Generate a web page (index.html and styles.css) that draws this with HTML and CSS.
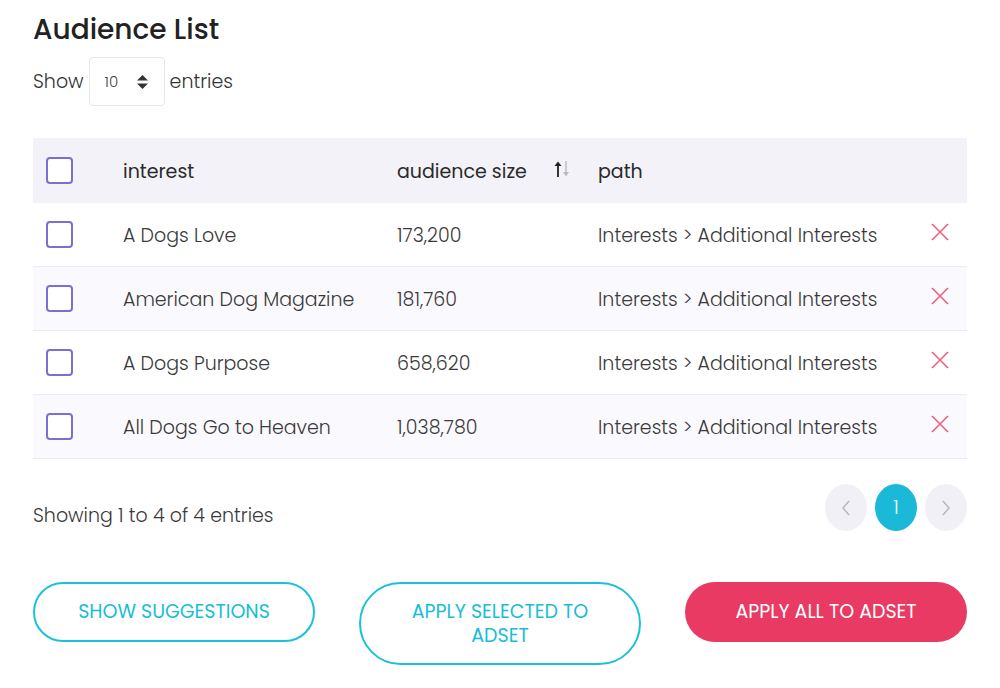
FILE: index.html
```html
<!DOCTYPE html>
<html>
<head>
<meta charset="utf-8">
<link rel="stylesheet" href="styles.css">
</head>
<body>
<div class="page">
  <h1 class="title">Audience List</h1>
  <div class="length">
    <span>Show</span>
    <div class="select">
      <span class="select-val">10</span>
      <svg class="select-arrows" width="13" height="18" viewBox="0 0 13 18"><path d="M1 7.5 L6.5 2 L12 7.5 Z M1 10.5 L6.5 16 L12 10.5 Z" fill="#333"/></svg>
    </div>
    <span>entries</span>
  </div>

  <table class="grid">
    <colgroup>
      <col class="c-check"><col class="c-interest"><col class="c-size"><col class="c-path"><col class="c-del">
    </colgroup>
    <thead>
      <tr>
        <th><span class="cb"></span></th>
        <th>interest</th>
        <th><div class="sorthead"><span>audience size</span>
          <svg class="sort" width="20" height="20" viewBox="0 0 20 20">
            <path d="M5 18 V4" stroke="#222" stroke-width="1.8"/>
            <path d="M1.5 7 L5 2.5 L8.5 7 Z" fill="#222"/>
            <path d="M13 2 V15" stroke="#bbb" stroke-width="1.4"/>
            <path d="M10 13 L13 17.5 L16 13 Z" fill="#bbb"/>
          </svg></div></th>
        <th>path</th>
        <th></th>
      </tr>
    </thead>
    <tbody>
      <tr>
        <td><span class="cb"></span></td><td>A Dogs Love</td><td>173,200</td><td>Interests &gt; Additional Interests</td>
        <td class="del"><svg width="18" height="18" viewBox="0 0 18 18"><path d="M1 1 L17 17 M17 1 L1 17" stroke="#f0607e" stroke-width="1.6"/></svg></td>
      </tr>
      <tr class="alt">
        <td><span class="cb"></span></td><td>American Dog Magazine</td><td>181,760</td><td>Interests &gt; Additional Interests</td>
        <td class="del"><svg width="18" height="18" viewBox="0 0 18 18"><path d="M1 1 L17 17 M17 1 L1 17" stroke="#f0607e" stroke-width="1.6"/></svg></td>
      </tr>
      <tr>
        <td><span class="cb"></span></td><td>A Dogs Purpose</td><td>658,620</td><td>Interests &gt; Additional Interests</td>
        <td class="del"><svg width="18" height="18" viewBox="0 0 18 18"><path d="M1 1 L17 17 M17 1 L1 17" stroke="#f0607e" stroke-width="1.6"/></svg></td>
      </tr>
      <tr class="alt">
        <td><span class="cb"></span></td><td>All Dogs Go to Heaven</td><td>1,038,780</td><td>Interests &gt; Additional Interests</td>
        <td class="del"><svg width="18" height="18" viewBox="0 0 18 18"><path d="M1 1 L17 17 M17 1 L1 17" stroke="#f0607e" stroke-width="1.6"/></svg></td>
      </tr>
    </tbody>
  </table>

  <div class="footer">
    <span class="info">Showing 1 to 4 of 4 entries</span>
    <div class="pager">
      <span class="pg pg-off"><svg width="10" height="16" viewBox="0 0 10 16"><path d="M8 1 L2 8 L8 15" fill="none" stroke="#b5b5bd" stroke-width="1.4"/></svg></span>
      <span class="pg pg-on">1</span>
      <span class="pg pg-off"><svg width="10" height="16" viewBox="0 0 10 16"><path d="M2 1 L8 8 L2 15" fill="none" stroke="#b5b5bd" stroke-width="1.4"/></svg></span>
    </div>
  </div>

  <div class="actions">
    <button class="btn btn-outline">SHOW SUGGESTIONS</button>
    <button class="btn btn-outline btn-tall"><span class="btn-line">APPLY SELECTED TO</span><span class="btn-line">ADSET</span></button>
    <button class="btn btn-fill">APPLY ALL TO ADSET</button>
  </div>
</div>
</body>
</html>
```

FILE: styles.css
```css
* { box-sizing: border-box; }
html, body { margin: 0; padding: 0; background: #fff; }
body {
  font-family: "Poppins", "Open Sans", "Noto Sans", sans-serif;
  color: #333;
}
.page { padding: 8px 33px 0 33px; }
.title {
  margin: 0;
  font-size: 28px;
  font-weight: 500;
  color: #222;
  line-height: 44px;
}
.length {
  display: flex;
  align-items: center;
  gap: 5px;
  font-size: 19px;
  font-weight: 300;
  color: #333;
  margin-top: 5px;
}
.select {
  width: 76px;
  height: 49px;
  border: 1px solid #e6e6ec;
  border-radius: 4px;
  display: flex;
  align-items: center;
  padding-left: 15px;
  gap: 18px;
}
.select-val { font-size: 15px; color: #444; }
.select-arrows { display: block; }

.grid {
  width: 100%;
  border-collapse: separate;
  border-spacing: 0;
  table-layout: fixed;
  margin-top: 32px;
  font-size: 19px;
}
.c-check { width: 90px; }
.c-interest { width: 274px; }
.c-size { width: 201px; }
.c-del { width: 56px; }
.grid thead tr { background: #f3f2f8; }
.grid th {
  height: 65px;
  text-align: left;
  font-weight: 400;
  color: #2a2a2a;
  padding: 2px 0 0 0;
  vertical-align: middle;
}
.grid th:first-child, .grid td:first-child { padding: 0 0 0 13px; }
.sorthead { display: flex; align-items: center; justify-content: space-between; padding-right: 25px; }
.sort { display: block; margin-top: -6px; }
.grid tbody tr.alt { background: #faf9fd; }
.grid td {
  height: 64px;
  border-bottom: 1px solid #edecf2;
  padding: 2px 0 0 0;
  vertical-align: middle;
  color: #3a3a3a;
  font-weight: 300;
}
.cb {
  display: block;
  width: 27px;
  height: 27px;
  border: 2px solid #7a6fd5;
  border-radius: 4px;
  background: #fff;
}
.grid td.del { text-align: left; padding: 0 0 0 20px; }
.del svg { display: block; margin-top: -6px; }

.footer {
  display: flex;
  justify-content: space-between;
  align-items: center;
  margin-top: 25px;
}
.info { font-size: 19px; font-weight: 300; color: #3a3a3a; padding-top: 16px; }
.pager { display: flex; gap: 8px; }
.pg {
  width: 42px;
  height: 47px;
  border-radius: 50%;
  display: flex;
  align-items: center;
  justify-content: center;
  font-size: 19px;
  font-weight: 300;
}
.pg-off { background: #f1f0f6; }
.pg-on { background: #1bb9d8; color: #fff; }

.actions {
  display: flex;
  justify-content: space-between;
  align-items: flex-start;
  margin-top: 51px;
}
.btn {
  width: 282px;
  height: 60px;
  border-radius: 30px;
  font-family: inherit;
  font-size: 19px;
  font-weight: 400;
  line-height: 24px;
  cursor: pointer;
}
.btn-line { display: block; line-height: 24px; }
.btn-outline { background: #fff; border: 2px solid #1bc1da; color: #19bdd8; }
.btn-tall { height: 83px; border-radius: 42px; }
.btn-fill { background: #e83a63; border: none; color: #fff; }
```
